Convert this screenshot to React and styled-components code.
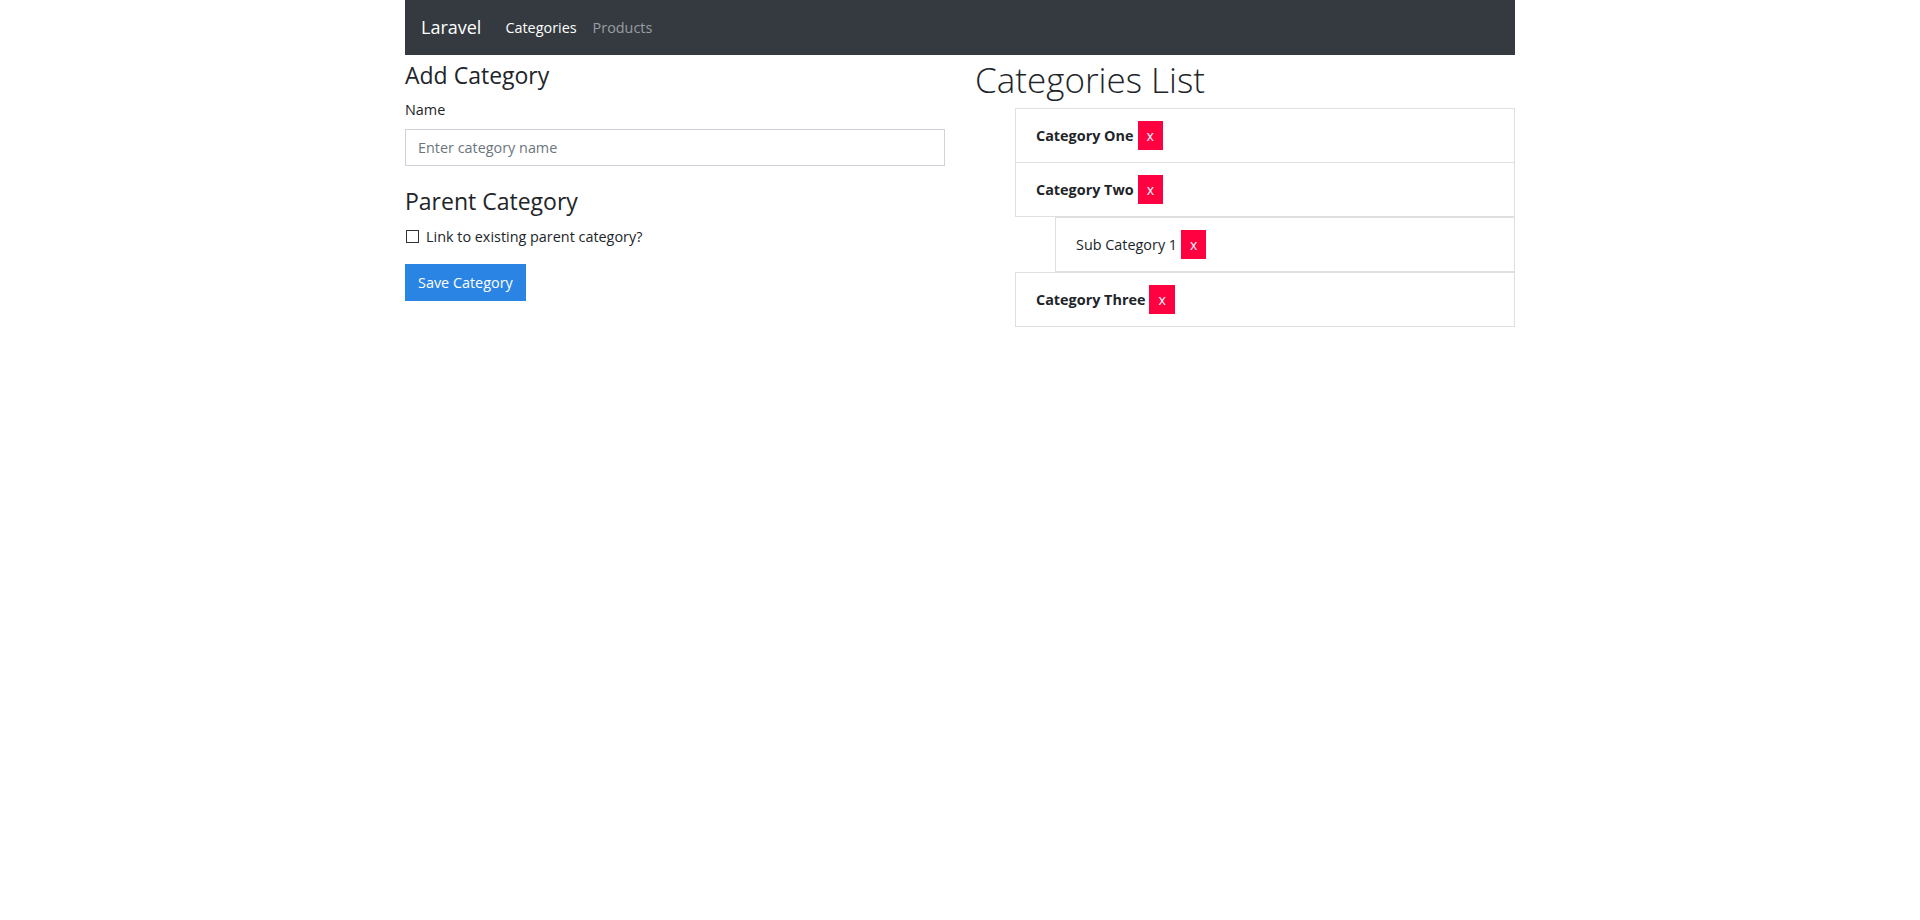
import React from "react";
import styled, { createGlobalStyle } from "styled-components";

const GlobalStyle = createGlobalStyle`
  body {
    margin: 0;
    background: #fff;
    color: #212529;
    font-family: "Segoe UI", "Open Sans", "Noto Sans", sans-serif;
    font-size: 14.4px;
    line-height: 1.6;
  }
  * {
    box-sizing: border-box;
  }
`;

const Container = styled.div`
  width: 1110px;
  margin: 0 auto;
`;

const Navbar = styled.nav`
  display: flex;
  align-items: center;
  background: #343a40;
  padding: 8px 16px;
`;

const Brand = styled.a`
  font-size: 18px;
  color: #fff;
  margin-right: 16px;
  padding: 3px 0;
  text-decoration: none;
`;

const NavLink = styled.a`
  padding: 8px;
  color: ${(p) => (p.active ? "#fff" : "rgba(255, 255, 255, 0.5)")};
  text-decoration: none;
`;

const Row = styled.div`
  display: grid;
  grid-template-columns: 1fr 1fr;
  column-gap: 30px;
`;

const Column = styled.div`
  padding-top: ${(p) => p.offset || 0}px;
`;

// margins collapse with the block before, so "top" is the real gap
const SubHeading = styled.h4`
  font-size: 23px;
  font-weight: 400;
  line-height: 1.2;
  margin: ${(p) => p.top || 0}px 0 8px;
`;

const FormGroup = styled.div`
  margin-bottom: 16px;
`;

const Label = styled.label`
  display: block;
  margin-bottom: 8px;
`;

const TextInput = styled.input`
  display: block;
  width: 100%;
  height: 37px;
  padding: 6px 12px;
  font: inherit;
  color: #495057;
  border: 1px solid #ced4da;
  border-radius: 0;
  outline: none;

  &::placeholder {
    color: #6c757d;
  }
`;

const CheckRow = styled.label`
  display: flex;
  align-items: center;
  gap: 7px;
  margin: 10px 0 16px;
`;

const Checkbox = styled.input`
  appearance: none;
  width: 13px;
  height: 13px;
  margin: 0 0 0 1px;
  border: 1px solid #333;
  background: #fff;
`;

const SaveButton = styled.button`
  font: inherit;
  color: #fff;
  background: #2a84e4;
  border: 1px solid #2a84e4;
  border-radius: 0;
  padding: 6px 12px;
`;

const Title = styled.h1`
  font-size: 35px;
  font-weight: 300;
  line-height: 1.2;
  margin: 4px 0 7px;
`;

const CategoryList = styled.ul`
  margin: 0;
  padding-left: 40px;
  list-style: none;
`;

const CategoryItem = styled.li`
  padding: 12px 20px;
  border: 1px solid rgba(0, 0, 0, 0.125);

  & + & {
    border-top-width: 0;
  }
`;

const CategoryName = styled.span`
  font-weight: ${(p) => (p.bold ? 700 : 400)};
`;

const DeleteButton = styled.button`
  display: inline-block;
  margin-left: 4px;
  padding: 4px 8px;
  font-family: inherit;
  font-size: 14px;
  line-height: 19px;
  color: #fff;
  background: #ff0040;
  border: 1px solid #ff0040;
  border-radius: 0;
`;

const categories = [
  { name: "Category One" },
  { name: "Category Two", children: [{ name: "Sub Category 1" }] },
  { name: "Category Three" }
];

function Category({ category, top }) {
  return (
    <>
      <CategoryItem>
        <CategoryName bold={top}>{category.name}</CategoryName>
        <DeleteButton>x</DeleteButton>
      </CategoryItem>
      {category.children && (
        <CategoryList>
          {category.children.map((child) => (
            <Category key={child.name} category={child} />
          ))}
        </CategoryList>
      )}
    </>
  );
}

export default function App() {
  return (
    <>
      <GlobalStyle />
      <Container>
        <Navbar>
          <Brand href="#">Laravel</Brand>
          <NavLink href="#" active>
            Categories
          </NavLink>
          <NavLink href="#">Products</NavLink>
        </Navbar>
        <Row>
          <Column offset={7}>
            <form>
              <SubHeading>Add Category</SubHeading>
              <FormGroup>
                <Label htmlFor="name">Name</Label>
                <TextInput id="name" placeholder="Enter category name" />
              </FormGroup>
              <SubHeading top={22}>Parent Category</SubHeading>
              <CheckRow>
                <Checkbox type="checkbox" />
                Link to existing parent category?
              </CheckRow>
              <SaveButton type="button">Save Category</SaveButton>
            </form>
          </Column>
          <Column>
            <Title>Categories List</Title>
            <CategoryList>
              {categories.map((category) => (
                <Category key={category.name} category={category} top />
              ))}
            </CategoryList>
          </Column>
        </Row>
      </Container>
    </>
  );
}
